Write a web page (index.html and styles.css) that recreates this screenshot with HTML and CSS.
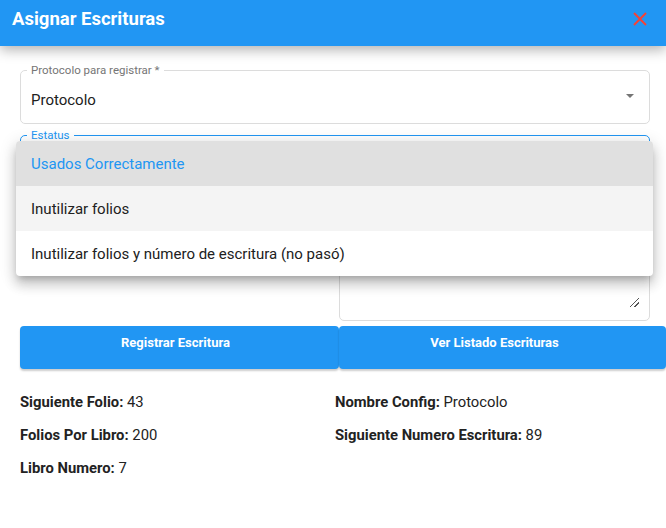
FILE: index.html
```html
<!DOCTYPE html>
<html lang="es">
<head>
<meta charset="utf-8">
<title>Asignar Escrituras</title>
<link rel="stylesheet" href="styles.css">
</head>
<body>
<div class="dialog">
  <header class="bar">
    <h1 class="title">Asignar Escrituras</h1>
    <button class="close" aria-label="Cerrar">
      <svg width="14" height="14" viewBox="0 0 14 14"><path d="M1 1L13 13M13 1L1 13" stroke="#f44336" stroke-width="2" fill="none"/></svg>
    </button>
  </header>
  <main class="content">
    <fieldset class="field">
      <legend class="legend">Protocolo para registrar *</legend>
      <div class="select-value">Protocolo</div>
      <span class="arrow"></span>
    </fieldset>
    <div class="status-wrap">
      <fieldset class="field field-focus">
        <legend class="legend legend-focus">Estatus</legend>
        <div class="select-value">&nbsp;</div>
      </fieldset>
      <ul class="menu">
        <li class="item item-selected">Usados Correctamente</li>
        <li class="item item-hover">Inutilizar folios</li>
        <li class="item">Inutilizar folios y número de escritura (no pasó)</li>
      </ul>
    </div>
    <div class="row">
      <div class="col"></div>
      <div class="col"><div class="textarea"><span class="resize"></span></div></div>
    </div>
    <div class="buttons">
      <button class="btn btn-left">Registrar Escritura</button>
      <button class="btn btn-right">Ver Listado Escrituras</button>
    </div>
    <div class="info">
      <p class="info-item"><b>Siguiente Folio:</b> 43</p>
      <p class="info-item"><b>Nombre Config:</b> Protocolo</p>
      <p class="info-item"><b>Folios Por Libro:</b> 200</p>
      <p class="info-item"><b>Siguiente Numero Escritura:</b> 89</p>
      <p class="info-item"><b>Libro Numero:</b> 7</p>
    </div>
  </main>
</div>
</body>
</html>
```
FILE: styles.css
```css
* { box-sizing: border-box; }
html, body { margin: 0; padding: 0; background: #fff; overflow: hidden; }
body { font-family: Roboto, "Liberation Sans", sans-serif; color: #212121; width: 666px; height: 528px; }

.bar {
  height: 46px;
  background: #2196f3;
  display: flex;
  align-items: center;
  justify-content: space-between;
  padding: 0 18px 0 12px;
  box-shadow: 0 4px 12px rgba(0,0,0,0.3);
  position: relative;
  z-index: 2;
}
.title { margin: 0; color: #fff; font-size: 18.5px; font-weight: 700; position: relative; top: -4px; }
.close { background: none; border: 0; padding: 0; width: 16px; height: 16px; display: flex; align-items: center; justify-content: center; position: relative; top: -4px; }

.content { padding: 17px 16px 0 20px; }

.field {
  margin: 0;
  border: 1px solid #dcdcdc;
  border-radius: 5px;
  padding: 0 10px 0 6px;
  height: 61px;
  position: relative;
  width: 630px;
}
.legend { font-size: 11.5px; color: #757575; padding: 0 4px; line-height: 14px; margin-left: 0; }
.select-value { font-size: 15px; line-height: 20px; padding-top: 13px; padding-left: 4px; }
.arrow {
  position: absolute; right: 15px; top: 17px;
  width: 0; height: 0;
  border-left: 4px solid transparent; border-right: 4px solid transparent; border-top: 4px solid #757575;
}

.status-wrap { position: relative; margin-top: 4px; }
.field-focus { border: 1px solid #2196f3; height: 60px; }
.legend-focus { color: #2196f3; }

.menu {
  position: absolute;
  left: -4px; top: 13px;
  width: 637px;
  margin: 0; padding: 0;
  list-style: none;
  background: #fff;
  border-radius: 4px;
  box-shadow: 0 5px 6px -3px rgba(0,0,0,0.2), 0 9px 12px 1px rgba(0,0,0,0.14), 0 3px 16px 2px rgba(0,0,0,0.12);
  overflow: hidden;
  z-index: 3;
}
.item { height: 45px; display: flex; align-items: center; padding: 0 15px; font-size: 15px; color: #212121; }
.item-selected { background: #e0e0e0; color: #2196f3; }
.item-hover { background: #f4f4f4; }

.row { display: grid; grid-template-columns: 319px 311px; margin-top: 8px; }
.textarea {
  height: 125px;
  border: 1px solid #dcdcdc;
  border-radius: 5px;
  position: relative;
}
.resize {
  position: absolute; right: 10px; bottom: 13px;
  width: 9px; height: 9px;
  background: linear-gradient(135deg, transparent 45%, #555 45%, #555 55%, transparent 55%, transparent 70%, #555 70%, #555 80%, transparent 80%);
}

.buttons { display: flex; margin-top: 5px; width: 646px; }
.btn {
  height: 43px;
  background: #2196f3;
  color: #fff;
  border: 0;
  border-radius: 4px;
  font-family: Roboto, "Liberation Sans", sans-serif;
  font-size: 13px;
  font-weight: 700;
  padding: 0 0 10px;
  box-shadow: 0 2px 2px rgba(0,0,0,0.2);
}
.btn-left { width: 319px; padding-right: 8px; }
.btn-right { width: 327px; padding-right: 16px; }

.info {
  display: grid;
  grid-template-columns: 315px 1fr;
  row-gap: 14px;
  margin-top: 24px;
}
.info-item { margin: 0; font-size: 14.8px; line-height: 19px; color: #222; }
.info-item b { font-weight: 700; }
```
